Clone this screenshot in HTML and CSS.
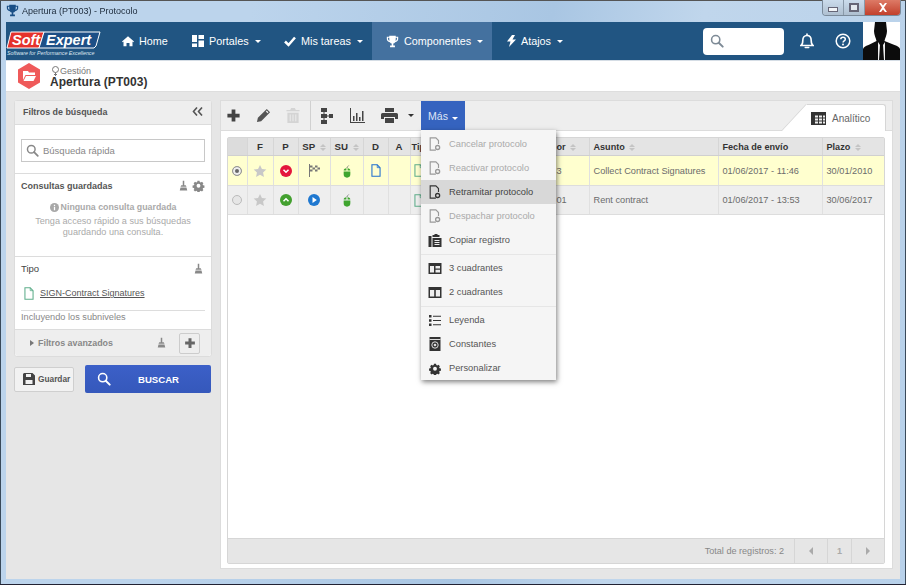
FILE: index.html
```html
<!DOCTYPE html>
<html lang="es">
<head>
<meta charset="utf-8">
<title>Apertura (PT003) - Protocolo</title>
<link rel="stylesheet" href="styles.css">
</head>
<body>

<svg class="defs" width="0" height="0">
  <symbol id="i-trophy" viewBox="0 0 16 16"><path d="M4 1h8v1h3v3c0 2-1.500 3.500-3.700 3.800C10.700 9.800 9.800 10.300 9 10.500V13h2v2H5v-2h2v-2.500C6.200 10.300 5.300 9.800 4.700 8.800 2.500 8.500 1 7 1 5V2h3zM2.500 3.500V5c0 1 .7 1.900 1.800 2.200-.2-1-.3-2.300-.3-3.700zm11 0H12c0 1.400-.1 2.700-.3 3.700 1.100-.3 1.800-1.200 1.800-2.200z"/></symbol>
  <symbol id="i-search" viewBox="0 0 16 16"><circle cx="6.500" cy="6.500" r="4.700" fill="none" stroke="currentColor" stroke-width="1.800"/><path d="M10 10l4.500 4.500" stroke="currentColor" stroke-width="2.200" stroke-linecap="round"/></symbol>
  <symbol id="i-broom" viewBox="0 0 12 16"><path d="M5 1h2v6h2l1 2H2l1-2h2zM2 10h8l1 4H1z"/></symbol>
  <symbol id="i-gear" viewBox="0 0 16 16"><path fill-rule="evenodd" d="M6.500 1h3l.4 2 1.400.6 1.700-1.100 2.100 2.100-1.100 1.700.6 1.400 2 .4v3l-2 .4-.6 1.400 1.100 1.700-2.100 2.100-1.700-1.100-1.400.6-.4 2h-3l-.4-2-1.400-.6-1.700 1.100-2.100-2.100 1.100-1.700-.6-1.400-2-.4v-3l2-.4.6-1.400-1.100-1.700 2.100-2.100 1.700 1.100 1.400-.6zM8 5.500a2.800 2.800 0 1 0 0 5.600 2.800 2.800 0 0 0 0-5.600z" transform="translate(1.200 1.200) scale(.85)"/></symbol>
  <symbol id="i-plus" viewBox="0 0 16 16"><path d="M6 1.500h4V6h4.500v4H10v4.500H6V10H1.500V6H6z"/></symbol>
  <symbol id="i-doc" viewBox="0 0 12 16"><path d="M1 1h6.500L11 4.500V15H1z" fill="none" stroke="currentColor" stroke-width="1.300"/><path d="M7.500 1v3.500H11" fill="none" stroke="currentColor"/></symbol>
  <symbol id="i-star" viewBox="0 0 16 16"><path d="M8 1l2.200 4.700 5 .6-3.700 3.500 1 5.100L8 12.400l-4.500 2.500 1-5.100L.8 6.300l5-.6z"/></symbol>
  <symbol id="i-mouse" viewBox="0 0 12 16"><path d="M2 8.500h8V12a4 4 0 0 1-8 0zM2 7.500C2 5.800 3 4.700 5.300 4.600v2.900zM6.700 4.600C9 4.700 10 5.800 10 7.500H6.700z"/><path d="M6 4.500C6 3 7 3 8 1.500" fill="none" stroke="currentColor" stroke-width="1.100"/></symbol>
  <symbol id="i-docgear" viewBox="0 0 14 16"><path d="M8 15H1.500V1H8l3 3v4" fill="none" stroke="currentColor" stroke-width="1.300"/><circle cx="10" cy="12" r="2.300" fill="none" stroke="currentColor" stroke-width="1.500"/></symbol>
</svg>

<div class="window">

  <div class="titlebar">
    <svg class="title-icon" width="13" height="13"><use href="#i-trophy"/></svg>
    <span class="title-text">Apertura (PT003) - Protocolo</span>
    <div class="win-btns">
      <span class="win-btn"><i class="glyph-min"></i></span>
      <span class="win-btn"><i class="glyph-max"></i></span>
      <span class="win-btn win-close">
        <svg width="10" height="9" viewBox="0 0 10 9"><path d="M1 0h2l2 2.500L7 0h2L6 4.500 9 9H7L5 6.500 3 9H1l3-4.500z" fill="#fff"/></svg>
      </span>
    </div>
  </div>

  <div class="client">

    <nav class="navbar">
      <svg class="logo" width="95" height="38" viewBox="0 0 95 38">
        <path d="M5 10h33l-5 16H1z" fill="#e5322c" stroke="#fff"/>
        <path d="M38 10h56l-4 14-2 2H33z" fill="#1d4f86" stroke="#fff"/>
        <text x="6" y="23" class="logo-word">Soft</text>
        <text x="40" y="23" class="logo-word">Expert</text>
        <text x="1" y="33" class="logo-tag">Software for Performance Excellence</text>
      </svg>
      <ul class="menu-main">
        <li class="nav-home">
          <svg width="12" height="12" viewBox="0 0 16 16" fill="#fff"><path d="M8 1.500l8 7-1 1-1-.8V15h-4v-4.500H6V15H2V8.700l-1 .8-1-1z"/></svg>
          Home
        </li>
        <li class="nav-portales">
          <svg width="12" height="12" viewBox="0 0 12 12" fill="#fff"><path d="M0 0h5v7H0zM6.500 0H12v4H6.500zM6.500 5.500H12V12H6.500zM0 8.500h5V12H0z"/></svg>
          Portales <b class="caret"></b>
        </li>
        <li class="nav-tareas">
          <svg width="12" height="12" viewBox="0 0 12 12" fill="none" stroke="#fff" stroke-width="2.500"><path d="M1 6.500l3.500 3.500L11 2.500"/></svg>
          Mis tareas <b class="caret"></b>
        </li>
        <li class="nav-comp active">
          <svg width="13" height="13" fill="#fff"><use href="#i-trophy"/></svg>
          Componentes <b class="caret"></b>
        </li>
        <li class="nav-atajos">
          <svg width="9" height="12" viewBox="0 0 9 12" fill="#fff"><path d="M5 0h3L5.500 4.500H9L2 12l1.500-5.500H0z"/></svg>
          Atajos <b class="caret"></b>
        </li>
      </ul>
      <div class="nav-right">
        <div class="nav-search">
          <svg width="14" height="14" class="nav-search-icon"><use href="#i-search"/></svg>
        </div>
        <svg class="nav-bell" width="14" height="16" viewBox="0 0 14 16" fill="none" stroke="#fff" stroke-width="1.600"><path d="M1 12.500c1.500-1 1.800-2.500 1.800-5C2.800 4.500 4.500 2.500 7 2.500s4.200 2 4.200 5c0 2.500.3 4 1.800 5z"/><path d="M5.300 14.500h3.400M7 1v1" stroke-linecap="round"/></svg>
        <svg class="nav-help" width="16" height="16" viewBox="0 0 16 16"><circle cx="8" cy="8" r="6.800" fill="none" stroke="#fff" stroke-width="1.500"/><path d="M5.800 6.200C5.800 5 6.800 4.300 8 4.300s2.300.7 2.300 2c0 1.700-2.200 1.600-2.200 3.200" fill="none" stroke="#fff" stroke-width="1.500"/><circle cx="8" cy="11.500" r="1" fill="#fff"/></svg>
        <div class="avatar">
          <svg width="37" height="38" viewBox="0 0 37 38">
            <path d="M12 0h11l1 9c0 4-2 7-2.500 10l10 4c3 1 5 2 5.500 4v11H0V27c.5-2 2.500-3 5.500-4l8-4C13 16 11 13 11 9z" fill="#0c0c0c"/>
            <path d="M15 20l2 3-1 15h-1zM22 20l-2 3 1 15h1z" fill="#eee"/>
          </svg>
        </div>
      </div>
    </nav>

    <header class="subhead">
      <svg class="hex" width="24" height="26" viewBox="0 0 24 26">
        <path d="M12 0l11 6.500v13L12 26 1 19.500v-13z" fill="#ef5a5a"/>
        <path d="M6 8h5l1 1.500h6V12H8.500L6 17zM9 13h10l-2.500 5H6.500z" fill="#fff"/>
      </svg>
      <div class="subhead-text">
        <div class="crumb">
          <svg width="7" height="10" viewBox="0 0 7 10" fill="none" stroke="#777"><circle cx="3.500" cy="3.500" r="3"/><path d="M3.500 6.500V10M2 8.500h3"/></svg>
          Gestión
        </div>
        <h1 class="page-title">Apertura (PT003)</h1>
      </div>
    </header>

    <div class="main">

      <aside class="side">
        <section class="filters">
          <div class="filters-head">
            <span>Filtros de búsqueda</span>
            <svg width="11" height="9" viewBox="0 0 11 9" fill="none" stroke="#555" stroke-width="1.600"><path d="M5 .5L1.500 4.500 5 8.500M10 .5L6.500 4.500 10 8.500"/></svg>
          </div>
          <div class="quick">
            <div class="quick-input">
              <svg width="13" height="13"><use href="#i-search"/></svg>
              Búsqueda rápida
            </div>
          </div>
          <div class="saved">
            <div class="sec-title">
              <span>Consultas guardadas</span>
              <svg class="tool" width="9" height="12"><use href="#i-broom"/></svg>
              <svg class="tool gear" width="13" height="13"><use href="#i-gear"/></svg>
            </div>
            <p class="empty-head">
              <svg width="9" height="9" viewBox="0 0 10 10"><circle cx="5" cy="5" r="5" fill="#a8a8a8"/><path d="M4.300 4.300h1.400V8H4.300zM4.300 2h1.400v1.400H4.300z" fill="#fff"/></svg>
              Ninguna consulta guardada
            </p>
            <p class="empty-text">Tenga acceso rápido a sus búsquedas<br>guardando una consulta.</p>
          </div>
          <div class="tipo">
            <div class="sec-title">
              <span>Tipo</span>
              <svg class="tool" width="9" height="12"><use href="#i-broom"/></svg>
            </div>
            <div class="tipo-link">
              <svg width="10" height="13" class="green-doc"><use href="#i-doc"/></svg>
              <a>SIGN-Contract Signatures</a>
            </div>
            <div class="tipo-note">Incluyendo los subniveles</div>
          </div>
          <div class="advanced">
            <i class="arrow-right"></i>
            <span>Filtros avanzados</span>
            <svg class="tool" width="9" height="12"><use href="#i-broom"/></svg>
            <button class="btn-plus"><svg width="12" height="12" fill="#666"><use href="#i-plus"/></svg></button>
          </div>
        </section>
        <div class="side-actions">
          <button class="btn-save">
            <svg width="12" height="12" viewBox="0 0 12 12"><path d="M1 0h8.500L12 2.500V12H0V1zM3 1v3h5V1zM2.500 7v4h7V7z" fill="#444"/></svg>
            Guardar
          </button>
          <button class="btn-search">
            <svg width="14" height="14" class="btn-search-icon"><use href="#i-search"/></svg>
            <span>BUSCAR</span>
          </button>
        </div>
      </aside>

      <section class="content">
        <div class="toolbar">
          <div class="tool-group">
            <svg width="15" height="15" fill="#444"><use href="#i-plus"/></svg>
            <svg width="15" height="15" viewBox="0 0 16 16" fill="#555"><path d="M11.500 1l3.500 3.500L5.500 14 1 15l1-4.500zM10.500 3.700l1.800 1.800 1-1-1.800-1.800z"/></svg>
            <svg width="14" height="15" viewBox="0 0 14 16" fill="#d4d4d4"><path d="M5 0h4l1 2h4v1.500H0V2h4zM1 5h12v11H1zM3.500 7v7h1V7zM6.500 7v7h1V7zM9.500 7v7h1V7z"/></svg>
          </div>
          <div class="tool-group group-two">
            <svg width="14" height="16" viewBox="0 0 14 16" fill="#444"><path d="M2 0h6v4H5.500v2H8v1.500h2V6h4v4h-4V8.500H8V10H5.500v2H8v4H2v-4h2.500v-2H2V6h2.500V4H2z"/></svg>
            <svg width="16" height="15" viewBox="0 0 16 15" fill="#444"><path d="M1 0h1v14h14v1H1zM4 8h1.500v5H4zM7 5h1.500v8H7zM10 9h1.500v4H10zM13 3h1.500v10H13z"/></svg>
            <svg width="17" height="15" viewBox="0 0 17 15" fill="#444"><path d="M4 0h9v4H4zM1.500 5h14A1.500 1.500 0 0 1 17 6.500V11h-3V9H3v2H0V6.500A1.500 1.500 0 0 1 1.500 5zM4 10h9v5H4z"/></svg>
            <b class="caret caret-dark"></b>
          </div>
          <div class="more">
            <button class="more-btn">Más <b class="caret"></b></button>
            <ul class="more-menu">
              <li class="off"><svg width="12" height="14"><use href="#i-docgear"/></svg>Cancelar protocolo</li>
              <li class="off"><svg width="12" height="14"><use href="#i-docgear"/></svg>Reactivar protocolo</li>
              <li class="hover"><svg width="12" height="14"><use href="#i-docgear"/></svg>Retramitar protocolo</li>
              <li class="off"><svg width="12" height="14"><use href="#i-docgear"/></svg>Despachar protocolo</li>
              <li class="sep-after"><svg width="13" height="13" viewBox="0 0 13 13" fill="#333"><path d="M0 2h3v11H0zM4 1h2V0h3v1h2v2H4zM4 4h9v9H4z"/><path d="M6 6h5v1H6zM6 8h5v1H6zM6 10h5v1H6z" fill="#eee"/></svg>Copiar registro</li>
              <li><svg width="13" height="11" viewBox="0 0 13 11"><path d="M0 0h13v11H0z" fill="#333"/><path d="M1.500 3h4v6.500h-4zM7 3h4.500v2.500H7zM7 6.700h4.500v2.800H7z" fill="#eee"/></svg>3 cuadrantes</li>
              <li class="sep-after"><svg width="13" height="11" viewBox="0 0 13 11"><path d="M0 0h13v11H0z" fill="#333"/><path d="M1.500 3h4.200v6.500H1.500zM7.300 3h4.200v6.500H7.300z" fill="#eee"/></svg>2 cuadrantes</li>
              <li><svg width="12" height="11" viewBox="0 0 12 11" fill="#333"><path d="M0 0h2.500v2.500H0zM0 4.200h2.500v2.500H0zM0 8.500h2.500V11H0zM4 .7h8v1H4zM4 5h8v1H4zM4 9.300h8v1H4z"/></svg>Leyenda</li>
              <li><svg width="11" height="14" viewBox="0 0 11 14"><path d="M0 0h11v14H0z" fill="#333"/><circle cx="5.500" cy="8" r="3.200" fill="none" stroke="#ddd"/><circle cx="5.500" cy="8" r="1.300" fill="#ddd"/><path d="M0 2h11v1H0z" fill="#ddd"/></svg>Constantes</li>
              <li><svg width="13" height="13" fill="#333"><use href="#i-gear"/></svg>Personalizar</li>
            </ul>
          </div>
          <div class="tab">
            <svg width="15" height="13" viewBox="0 0 15 13"><path d="M0 0h15v13H0z" fill="#333"/><path d="M4 3.500h3v2H4zM8 3.500h3v2H8zM12 3.500h2v2h-2zM4 6.500h3v2H4zM8 6.500h3v2H8zM12 6.500h2v2h-2zM4 9.500h3v2H4zM8 9.500h3v2H8zM12 9.500h2v2h-2z" fill="#eee"/></svg>
            Analítico
          </div>
        </div>

        <div class="panel">
          <div class="grid">
            <table class="records">
              <colgroup>
                <col class="c-sel"><col class="c-f"><col class="c-p"><col class="c-sp"><col class="c-su"><col class="c-d"><col class="c-a"><col class="c-tipo"><col class="c-id"><col class="c-asunto"><col class="c-fecha"><col class="c-plazo">
              </colgroup>
              <thead>
                <tr>
                  <th></th><th class="mid">F</th><th class="mid">P</th>
                  <th class="mid">SP <i class="sort"></i></th>
                  <th class="mid">SU <i class="sort"></i></th>
                  <th class="mid">D</th><th class="mid">A</th>
                  <th class="tight">Tip</th><th>or <i class="sort"></i></th>
                  <th>Asunto <i class="sort"></i></th>
                  <th>Fecha de envío</th>
                  <th>Plazo <i class="sort"></i></th>
                </tr>
              </thead>
              <tbody>
                <tr class="row-sel">
                  <td class="mid"><i class="radio radio-on"></i></td>
                  <td class="mid"><svg width="14" height="14" fill="#c8c8c8"><use href="#i-star"/></svg></td>
                  <td class="mid"><svg width="12" height="12" viewBox="0 0 12 12"><circle cx="6" cy="6" r="6" fill="#e4163c"/><path d="M3.500 4.800L6 7.300l2.500-2.500" fill="none" stroke="#fff" stroke-width="1.500"/></svg></td>
                  <td class="mid"><svg width="13" height="13" viewBox="0 0 13 13"><path d="M1 0h1v13H1z" fill="#777"/><path d="M2 1.500h2.500v2H2zM7 1.500h2.500v2H7zM4.500 3.500H7v2H4.500zM9.500 3.500H12v2H9.500zM2 5.500h2.500v2H2zM7 5.500h2.500v2H7z" fill="#777"/></svg></td>
                  <td class="mid"><svg width="10" height="14" fill="#3fa52f"><use href="#i-mouse"/></svg></td>
                  <td class="mid"><svg width="10" height="13" class="blue-doc"><use href="#i-doc"/></svg></td>
                  <td></td>
                  <td class="tight"><svg width="10" height="13" class="green-doc"><use href="#i-doc"/></svg></td>
                  <td>3</td>
                  <td>Collect Contract Signatures</td>
                  <td>01/06/2017 - 11:46</td>
                  <td>30/01/2010</td>
                </tr>
                <tr class="row-alt">
                  <td class="mid"><i class="radio"></i></td>
                  <td class="mid"><svg width="14" height="14" fill="#c8c8c8"><use href="#i-star"/></svg></td>
                  <td class="mid"><svg width="12" height="12" viewBox="0 0 12 12"><circle cx="6" cy="6" r="6" fill="#43a02f"/><path d="M3.500 7.200L6 4.700l2.500 2.500" fill="none" stroke="#fff" stroke-width="1.500"/></svg></td>
                  <td class="mid"><svg width="12" height="12" viewBox="0 0 12 12"><circle cx="6" cy="6" r="6" fill="#1f78d0"/><path d="M4.500 3l4.300 3-4.300 3z" fill="#fff"/></svg></td>
                  <td class="mid"><svg width="10" height="14" fill="#3fa52f"><use href="#i-mouse"/></svg></td>
                  <td></td>
                  <td></td>
                  <td class="tight"><svg width="10" height="13" class="green-doc"><use href="#i-doc"/></svg></td>
                  <td>01</td>
                  <td>Rent contract</td>
                  <td>01/06/2017 - 13:53</td>
                  <td>30/06/2017</td>
                </tr>
              </tbody>
            </table>
            <div class="grid-fill"></div>
            <div class="grid-foot">
              <span class="total">Total de registros: 2</span>
              <span class="pager"><i class="arrow-left"></i></span>
              <span class="pager pager-num">1</span>
              <span class="pager"><i class="arrow-right arrow-pale"></i></span>
            </div>
          </div>
        </div>
      </section>

    </div>
  </div>
</div>

</body>
</html>
```

FILE: styles.css
```css
html, body { margin: 0; padding: 0; }
body { width: 906px; height: 585px; overflow: hidden; font-family: "Liberation Sans", Arial, sans-serif; font-size: 10px; color: #666; }
ul { margin: 0; padding: 0; list-style: none; }
p { margin: 0; }
svg { display: block; flex: none; }
button { font-family: inherit; cursor: pointer; }
.defs { position: absolute; }

/* window frame */
.window { box-sizing: border-box; width: 906px; height: 585px; padding: 0 6px 6px; display: flex; flex-direction: column; background: linear-gradient(100deg, #bcd4ec 0%, #bcd4ec 25%, #a9c6e3 55%, #c0d6ec 70%, #b8d1ea 100%); border-top: 1px solid #555; box-shadow: inset 0 -1px 0 #223, inset 1px 0 0 #3a4a5a, inset -1px 0 0 #3a4a5a; filter: blur(.35px); }
.titlebar { height: 21px; flex: none; display: flex; align-items: center; color: #1c2a3a; position: relative; }
.title-icon { color: #1a4f86; fill: #1a4f86; margin-right: 3px; margin-top: -2px; }
.title-text { font-size: 9px; margin-top: -1px; }
.win-btns { margin-left: auto; margin-right: -1px; align-self: flex-start; display: flex; height: 15px; border: 1px solid #7a8a9a; border-top: 0; border-radius: 0 0 4px 4px; overflow: hidden; margin-top: -1px; }
.win-btn { width: 20px; display: flex; align-items: center; justify-content: center; background: linear-gradient(#cbdcec, #aebfd0); border-right: 1px solid #8a9aaa; }
.win-close { width: 35px; background: linear-gradient(#dd7a66, #c2402c); border-right: 0; }
.glyph-min { width: 8px; height: 3px; margin-top: 4px; background: #f2f5f8; border: 1px solid #667; }
.glyph-max { width: 6px; height: 5px; background: #e4eaf0; border: 2px solid #667; }

.client { flex: 1; min-height: 0; display: flex; flex-direction: column; background: #e6e6e6; }

/* nav */
.navbar { height: 38px; flex: none; display: flex; align-items: stretch; background: #215582; color: #fff; font-size: 10.8px; border-bottom: 1px solid #d5dde5; }
.logo-word { font: italic bold 14.500px "Liberation Sans", sans-serif; fill: #fff; }
.logo-tag { font: italic 5.300px "Liberation Sans", sans-serif; fill: #dfe8f0; }
.menu-main { display: flex; margin-left: 16px; }
.menu-main li { display: flex; align-items: center; gap: 5px; white-space: nowrap; box-sizing: border-box; }
.nav-home { width: 74px; padding-left: 5px; }
.nav-portales { width: 92px; padding-left: 1px; }
.nav-tareas { width: 89px; padding-left: 1px; }
.nav-comp { width: 120px; padding-left: 14px; }
.nav-atajos { padding-left: 15px; gap: 6px; }
.active { background: #44719f; }
.caret { display: inline-block; width: 0; height: 0; border-left: 3px solid transparent; border-right: 3px solid transparent; border-top: 3px solid #fff; margin-left: 1px; }
.caret-dark { border-top-color: #333; }
.nav-right { margin-left: auto; display: flex; align-items: center; }
.nav-search { width: 81px; height: 27px; box-sizing: border-box; background: #fff; border-radius: 4px; padding: 6px 0 0 7px; color: #8a8a8a; }
.nav-search-icon { color: #7d8a96; }
.nav-bell { margin: 0 0 0 16px; }
.nav-help { margin: 0 0 0 21px; }
.avatar { width: 37px; height: 38px; margin-left: 12px; background: #fff; }

/* page heading */
.subhead { height: 31px; box-sizing: border-box; padding: 0 0 0 11px; flex: none; display: flex; align-items: center; gap: 9px; background: #fff; border-bottom: 1px solid #dedede; }
.subhead-text { padding-top: 2px; }
.crumb { display: flex; align-items: center; gap: 1px; margin-left: 2px; font-size: 9px; color: #777; line-height: 10px; }
.page-title { margin: 0; font-size: 12px; line-height: 13px; color: #333; letter-spacing: .05px; }

.main { flex: 1; min-height: 0; display: flex; gap: 8px; padding: 8px 7px 10px 8px; }

/* left column */
.side { width: 198px; flex: none; }
.filters { box-sizing: border-box; height: 257px; display: flex; flex-direction: column; background: #fff; border: 1px solid #dcdcdc; border-radius: 3px; }
.filters-head { height: 24px; box-sizing: border-box; padding: 0 8px 2px 8px; flex: none; display: flex; align-items: center; justify-content: space-between; background: #eee; border-bottom: 1px solid #dcdcdc; font-weight: bold; font-size: 8.900px; color: #555; }
.quick { height: 49px; flex: none; padding: 14px 6px 0; box-sizing: border-box; border-bottom: 1px solid #dcdcdc; }
.quick-input { height: 23px; box-sizing: border-box; display: flex; align-items: center; gap: 4px; padding-left: 4px; border: 1px solid #c8c8c8; color: #888; font-size: 9.500px; }
.saved { height: 83px; flex: none; padding: 5px 6px 0; box-sizing: border-box; border-bottom: 1px solid #dcdcdc; }
.sec-title { display: flex; align-items: center; height: 13px; font-weight: bold; font-size: 9px; color: #555; }
.sec-title span { margin-right: auto; }
.tool { fill: #888; }
.gear { margin-left: 4px; }
.empty-head { display: flex; justify-content: center; align-items: center; gap: 2px; margin-top: 10px; font-weight: bold; color: #aaa; font-size: 8.800px; }
.empty-text { margin-top: 4px; text-align: center; line-height: 11px; color: #aaa; font-size: 9.150px; }
.tipo { height: 72px; flex: none; box-sizing: border-box; padding: 5px 6px 0; }
.tipo .tool { margin-right: 2px; }
.tipo .sec-title { font-weight: normal; color: #444; font-size: 9.500px; }
.tipo-link { display: flex; align-items: center; gap: 6px; margin: 11px 0 0 3px; height: 14px; }
.tipo-link a { text-decoration: underline; font-size: 9px; color: #555; }
.tipo-note { margin: 10px 0 0 0; border-top: 1px solid #ddd; line-height: 12px; font-size: 9.200px; color: #888; }
.advanced { flex: 1; display: flex; align-items: center; padding: 0 11px 0 15px; background: #eee; border-top: 1px solid #dcdcdc; border-radius: 0 0 3px 3px; font-weight: bold; font-size: 8.900px; color: #888; }
.advanced span { margin-left: 4px; margin-right: auto; }
.arrow-right { width: 0; height: 0; border-left: 4px solid #777; border-top: 3px solid transparent; border-bottom: 3px solid transparent; }
.btn-plus { width: 21px; height: 21px; margin-left: 13px; padding: 0 0 0 4px; background: #eee; border: 1px solid #ccc; border-radius: 2px; }
.side-actions { display: flex; align-items: center; gap: 11px; margin-top: 8px; }
.btn-save { width: 60px; height: 25px; display: flex; align-items: center; gap: 3px; padding: 0 0 0 8px; background: #f2f2f2; border: 1px solid #cfcfcf; border-radius: 2px; font-weight: bold; font-size: 8.300px; color: #555; }
.btn-search { width: 126px; height: 28px; display: flex; align-items: center; padding: 0 0 0 12px; background: linear-gradient(#3c60c8, #3558bb); border: 0; border-radius: 2px; color: #fff; font-weight: bold; font-size: 9.600px; }
.btn-search span { margin-left: 27px; }
.btn-search-icon { color: #fff; }

/* right column */
.content { flex: 1; min-width: 0; display: flex; flex-direction: column; border: 1px solid #dcdcdc; background: #eee; }
.toolbar { height: 29px; flex: none; display: flex; position: relative; }
.tool-group { display: flex; align-items: center; gap: 15px; padding-left: 5px; width: 84px; border-right: 1px solid #d0d0d0; margin-right: 1px; }
.group-two { width: 103px; padding-left: 7px; gap: 16px; box-sizing: border-box; border-right: 0; margin-right: 6px; }
.group-two .caret { margin-left: -6px; }
.more { position: relative; width: 44px; }
.more-btn { width: 44px; height: 29px; padding: 0; background: #3563bf; border: 0; color: #dfe6f5; font-size: 10.500px; }
.more-menu { position: absolute; left: 0; top: 29px; z-index: 5; box-sizing: border-box; width: 135px; height: 250px; padding-top: 2px; background: #f5f5f5; box-shadow: 1px 2px 5px rgba(0,0,0,.5); }
.more-menu li { position: relative; height: 24px; display: flex; align-items: center; padding-left: 7px; color: #555; font-size: 9.300px; }
.more-menu svg { width: 14px; margin-right: 7px; color: #333; }
.more-menu .off { color: #aaa; }
.more-menu .off svg { color: #999; }
.more-menu .hover { background: #d8d8d8; color: #444; }
.more-menu .sep-after { margin-bottom: 4px; }
.more-menu .sep-after::after { content: ""; position: absolute; left: 0; right: 0; bottom: -3px; border-bottom: 1px solid #e6e6e6; }
.tab { position: absolute; right: 6px; bottom: -1px; width: 80px; height: 27px; display: flex; align-items: center; gap: 6px; padding-left: 5px; box-sizing: border-box; background: #fff; border: 1px solid #d6d6d6; border-bottom: 0; border-left: 0; border-radius: 0 3px 0 0; font-size: 10px; color: #666; z-index: 1; }
.tab::before { content: ""; position: absolute; left: -25px; bottom: 0; border-style: solid; border-width: 0 0 27px 25px; border-color: transparent transparent #d6d6d6 transparent; }
.tab::after { content: ""; position: absolute; left: -24px; bottom: 0; border-style: solid; border-width: 0 0 27px 25px; border-color: transparent transparent #fff transparent; }

.panel { flex: 1; min-height: 0; padding: 6px 7px 4px 6px; background: #fff; border-top: 1px solid #dcdcdc; }
.grid { height: 100%; box-sizing: border-box; display: flex; flex-direction: column; border: 1px solid #d6d6d6; border-radius: 2px; }
.records { width: 100%; flex: none; table-layout: fixed; border-collapse: collapse; font-size: 9.200px; }
.c-sel { width: 19px; }
.c-f { width: 26px; }
.c-p { width: 25px; }
.c-sp { width: 32px; }
.c-su { width: 33px; }
.c-d { width: 25px; }
.c-a { width: 22px; }
.c-tipo { width: 142px; }
.c-id { width: 37px; }
.c-asunto { width: 129px; }
.c-fecha { width: 104px; }
.records th { height: 17px; padding: 0 4px; background: #e4e4e4; border-right: 1px solid #d6d6d6; border-bottom: 1px solid #d0d0d0; text-align: left; font-size: 9.100px; color: #333; white-space: nowrap; }
.records th:first-child { background: #dcdcdc; }
.records td { height: 29px; padding: 0 4px; border-right: 1px solid #e0e0e0; border-bottom: 1px solid #ddd; white-space: nowrap; overflow: hidden; color: #6b6b6b; }
.records th:last-child, .records td:last-child { border-right: 0; }
.records .mid { text-align: center; padding: 0; }
.records th.mid { font-size: 9.700px; }
.records .tight { padding-left: 1px; }
.records td.tight { padding-left: 3px; }
.records td > svg { display: block; }
.records td.mid > svg { display: inline-block; vertical-align: middle; }
.row-sel td { background: #ffffcf; }
.row-alt td { background: #eeeeee; height: 28px; }
.sort { display: inline-block; position: relative; width: 6px; height: 7px; margin-left: 2px; vertical-align: -1px; }
.sort::before, .sort::after { content: ""; position: absolute; left: 0; border-left: 3px solid transparent; border-right: 3px solid transparent; }
.sort::before { top: 0; border-bottom: 3px solid #c4c4c4; }
.sort::after { bottom: 0; border-top: 3px solid #c4c4c4; }
.radio { display: inline-block; width: 10px; height: 10px; box-sizing: border-box; vertical-align: middle; border: 1px solid #bbb; border-radius: 50%; background: #e6e6e6; }
.radio-on { background: #666; box-shadow: inset 0 0 0 2px #eee; border-color: #999; }
.green-doc { color: #5fae8b; fill: #eaf6ee; }
.blue-doc { color: #1f6fd0; fill: #fff; }
.grid-fill { flex: 1; background: #fff; }
.grid-foot { height: 24px; flex: none; display: flex; align-items: center; background: #e6e6e6; border-top: 1px solid #d6d6d6; color: #888; font-size: 9.100px; }
.total { margin-left: auto; margin-right: 10px; }
.pager { height: 100%; width: 33px; box-sizing: border-box; display: flex; align-items: center; justify-content: center; border-left: 1px solid #d6d6d6; color: #aaa; }
.pager-num { width: 24px; font-weight: bold; }
.arrow-left { width: 0; height: 0; border-right: 4px solid #aaa; border-top: 4px solid transparent; border-bottom: 4px solid transparent; }
.arrow-pale { border-left-color: #aaa; border-top-width: 4px; border-bottom-width: 4px; }
```
